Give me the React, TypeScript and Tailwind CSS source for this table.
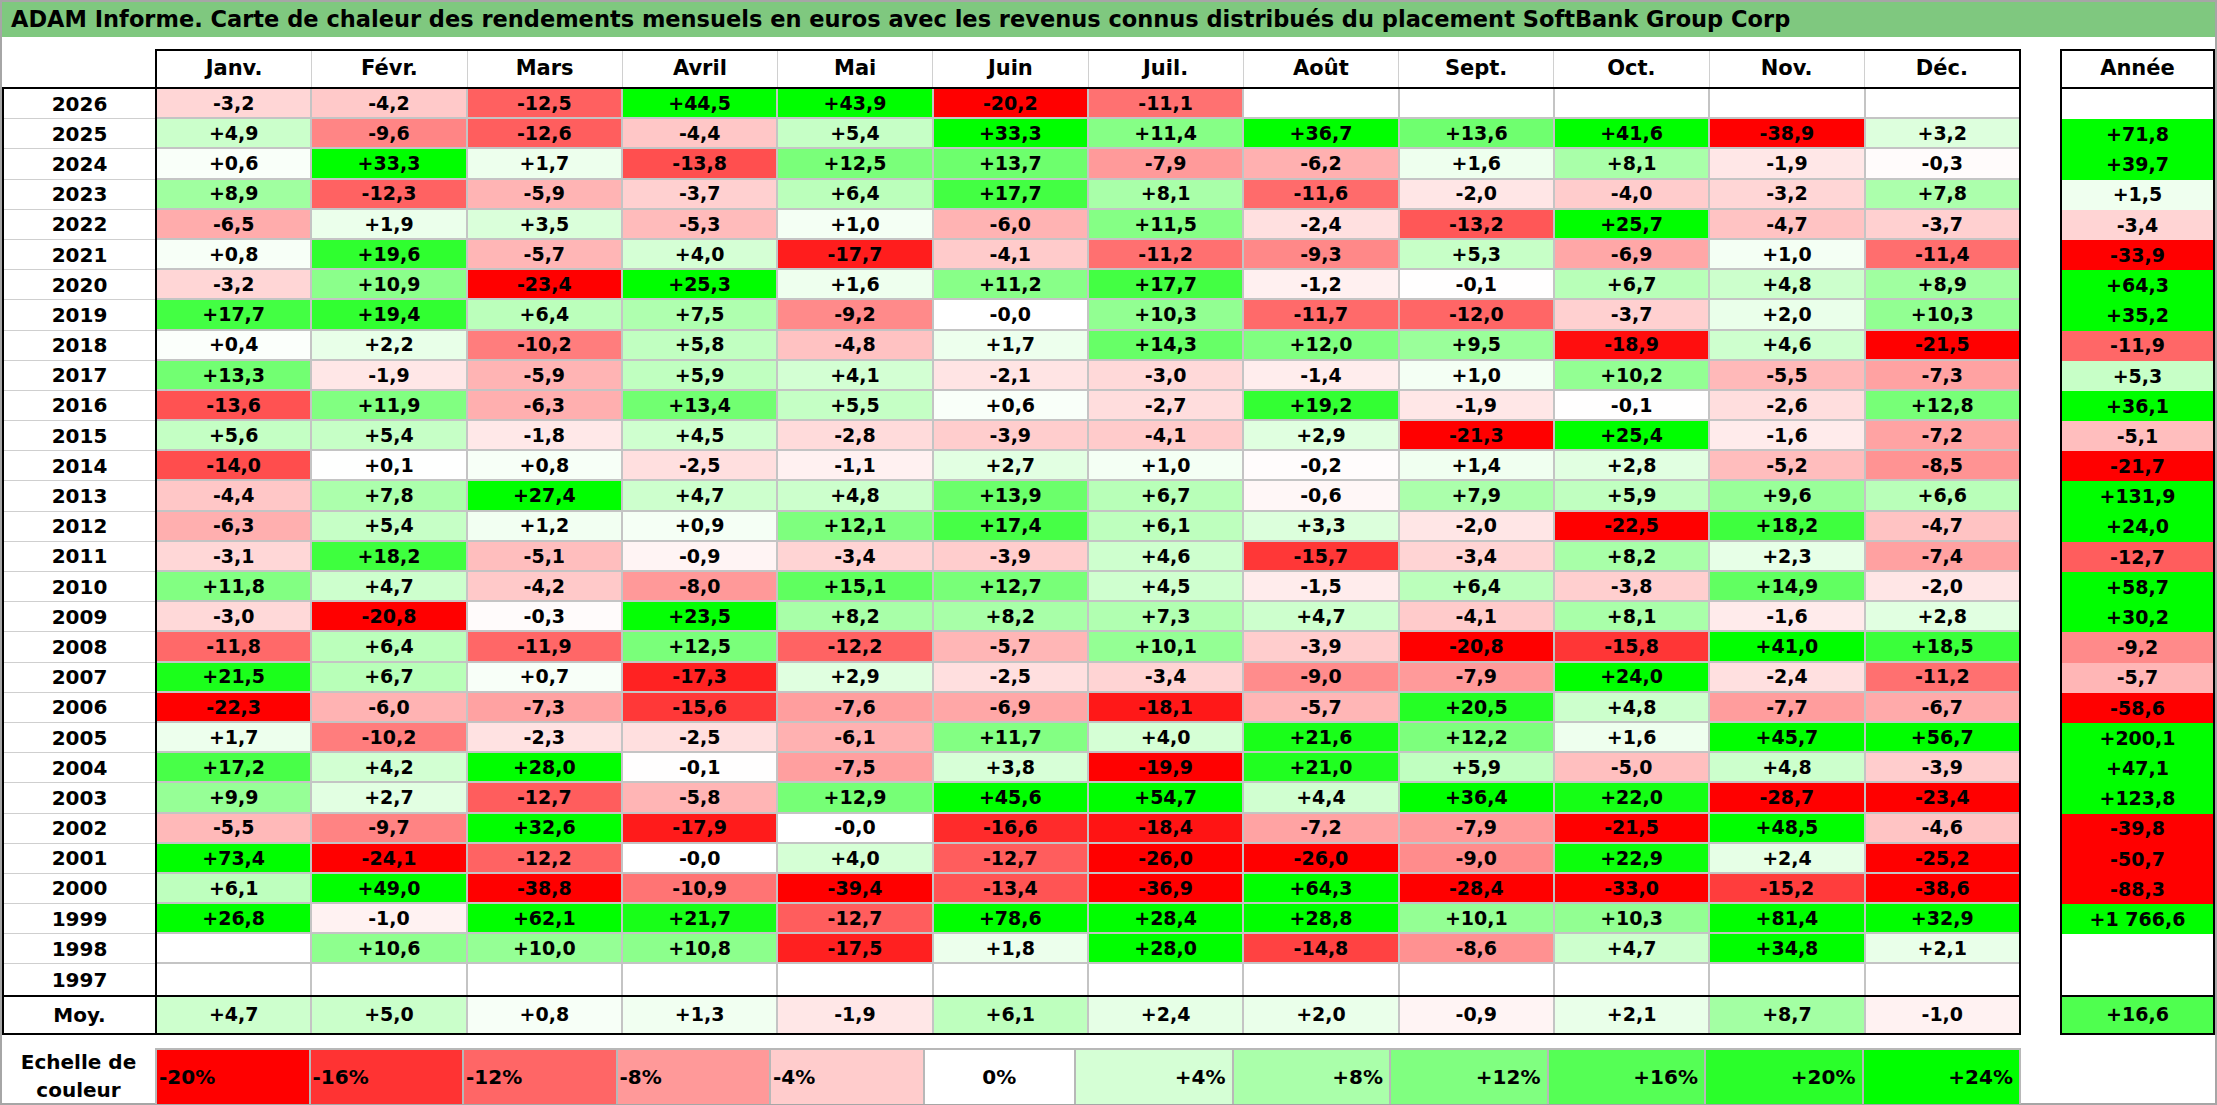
import React from "react"

const months = ["Janv.", "Févr.", "Mars", "Avril", "Mai", "Juin", "Juil.", "Août", "Sept.", "Oct.", "Nov.", "Déc."]

// year, 12 monthly values, yearly total ("" = no data)
const rows: [string, string[], string][] = [
  ["2026", ["-3,2", "-4,2", "-12,5", "+44,5", "+43,9", "-20,2", "-11,1", "", "", "", "", ""], ""],
  ["2025", ["+4,9", "-9,6", "-12,6", "-4,4", "+5,4", "+33,3", "+11,4", "+36,7", "+13,6", "+41,6", "-38,9", "+3,2"], "+71,8"],
  ["2024", ["+0,6", "+33,3", "+1,7", "-13,8", "+12,5", "+13,7", "-7,9", "-6,2", "+1,6", "+8,1", "-1,9", "-0,3"], "+39,7"],
  ["2023", ["+8,9", "-12,3", "-5,9", "-3,7", "+6,4", "+17,7", "+8,1", "-11,6", "-2,0", "-4,0", "-3,2", "+7,8"], "+1,5"],
  ["2022", ["-6,5", "+1,9", "+3,5", "-5,3", "+1,0", "-6,0", "+11,5", "-2,4", "-13,2", "+25,7", "-4,7", "-3,7"], "-3,4"],
  ["2021", ["+0,8", "+19,6", "-5,7", "+4,0", "-17,7", "-4,1", "-11,2", "-9,3", "+5,3", "-6,9", "+1,0", "-11,4"], "-33,9"],
  ["2020", ["-3,2", "+10,9", "-23,4", "+25,3", "+1,6", "+11,2", "+17,7", "-1,2", "-0,1", "+6,7", "+4,8", "+8,9"], "+64,3"],
  ["2019", ["+17,7", "+19,4", "+6,4", "+7,5", "-9,2", "-0,0", "+10,3", "-11,7", "-12,0", "-3,7", "+2,0", "+10,3"], "+35,2"],
  ["2018", ["+0,4", "+2,2", "-10,2", "+5,8", "-4,8", "+1,7", "+14,3", "+12,0", "+9,5", "-18,9", "+4,6", "-21,5"], "-11,9"],
  ["2017", ["+13,3", "-1,9", "-5,9", "+5,9", "+4,1", "-2,1", "-3,0", "-1,4", "+1,0", "+10,2", "-5,5", "-7,3"], "+5,3"],
  ["2016", ["-13,6", "+11,9", "-6,3", "+13,4", "+5,5", "+0,6", "-2,7", "+19,2", "-1,9", "-0,1", "-2,6", "+12,8"], "+36,1"],
  ["2015", ["+5,6", "+5,4", "-1,8", "+4,5", "-2,8", "-3,9", "-4,1", "+2,9", "-21,3", "+25,4", "-1,6", "-7,2"], "-5,1"],
  ["2014", ["-14,0", "+0,1", "+0,8", "-2,5", "-1,1", "+2,7", "+1,0", "-0,2", "+1,4", "+2,8", "-5,2", "-8,5"], "-21,7"],
  ["2013", ["-4,4", "+7,8", "+27,4", "+4,7", "+4,8", "+13,9", "+6,7", "-0,6", "+7,9", "+5,9", "+9,6", "+6,6"], "+131,9"],
  ["2012", ["-6,3", "+5,4", "+1,2", "+0,9", "+12,1", "+17,4", "+6,1", "+3,3", "-2,0", "-22,5", "+18,2", "-4,7"], "+24,0"],
  ["2011", ["-3,1", "+18,2", "-5,1", "-0,9", "-3,4", "-3,9", "+4,6", "-15,7", "-3,4", "+8,2", "+2,3", "-7,4"], "-12,7"],
  ["2010", ["+11,8", "+4,7", "-4,2", "-8,0", "+15,1", "+12,7", "+4,5", "-1,5", "+6,4", "-3,8", "+14,9", "-2,0"], "+58,7"],
  ["2009", ["-3,0", "-20,8", "-0,3", "+23,5", "+8,2", "+8,2", "+7,3", "+4,7", "-4,1", "+8,1", "-1,6", "+2,8"], "+30,2"],
  ["2008", ["-11,8", "+6,4", "-11,9", "+12,5", "-12,2", "-5,7", "+10,1", "-3,9", "-20,8", "-15,8", "+41,0", "+18,5"], "-9,2"],
  ["2007", ["+21,5", "+6,7", "+0,7", "-17,3", "+2,9", "-2,5", "-3,4", "-9,0", "-7,9", "+24,0", "-2,4", "-11,2"], "-5,7"],
  ["2006", ["-22,3", "-6,0", "-7,3", "-15,6", "-7,6", "-6,9", "-18,1", "-5,7", "+20,5", "+4,8", "-7,7", "-6,7"], "-58,6"],
  ["2005", ["+1,7", "-10,2", "-2,3", "-2,5", "-6,1", "+11,7", "+4,0", "+21,6", "+12,2", "+1,6", "+45,7", "+56,7"], "+200,1"],
  ["2004", ["+17,2", "+4,2", "+28,0", "-0,1", "-7,5", "+3,8", "-19,9", "+21,0", "+5,9", "-5,0", "+4,8", "-3,9"], "+47,1"],
  ["2003", ["+9,9", "+2,7", "-12,7", "-5,8", "+12,9", "+45,6", "+54,7", "+4,4", "+36,4", "+22,0", "-28,7", "-23,4"], "+123,8"],
  ["2002", ["-5,5", "-9,7", "+32,6", "-17,9", "-0,0", "-16,6", "-18,4", "-7,2", "-7,9", "-21,5", "+48,5", "-4,6"], "-39,8"],
  ["2001", ["+73,4", "-24,1", "-12,2", "-0,0", "+4,0", "-12,7", "-26,0", "-26,0", "-9,0", "+22,9", "+2,4", "-25,2"], "-50,7"],
  ["2000", ["+6,1", "+49,0", "-38,8", "-10,9", "-39,4", "-13,4", "-36,9", "+64,3", "-28,4", "-33,0", "-15,2", "-38,6"], "-88,3"],
  ["1999", ["+26,8", "-1,0", "+62,1", "+21,7", "-12,7", "+78,6", "+28,4", "+28,8", "+10,1", "+10,3", "+81,4", "+32,9"], "+1 766,6"],
  ["1998", ["", "+10,6", "+10,0", "+10,8", "-17,5", "+1,8", "+28,0", "-14,8", "-8,6", "+4,7", "+34,8", "+2,1"], ""],
  ["1997", ["", "", "", "", "", "", "", "", "", "", "", ""], ""],
]

const avg = ["+4,7", "+5,0", "+0,8", "+1,3", "-1,9", "+6,1", "+2,4", "+2,0", "-0,9", "+2,1", "+8,7", "-1,0"]
const scale = [-20, -16, -12, -8, -4, 0, 4, 8, 12, 16, 20, 24]

function heat(v: number | null) {
  if (v === null) return "#ffffff"
  if (v >= 0) {
    const c = Math.round(255 * (1 - Math.min(1, v / 24)))
    return `rgb(${c},255,${c})`
  }
  const c = Math.round(255 * (1 - Math.min(1, -v / 20)))
  return `rgb(255,${c},${c})`
}

function num(s: string) {
  if (!s) return null
  return parseFloat(s.replace(/\s/g, "").replace(",", "."))
}

export default function App() {
  return (
    <div className="w-[2217px] h-[1105px] border-2 border-[#a6a6a6] bg-white flex flex-col font-['DejaVu_Sans',sans-serif] font-bold text-black">
      <div className="h-[35px] shrink-0 bg-[#7fc87f] pl-[9px] flex items-center text-[22.5px] whitespace-nowrap">
        ADAM Informe. Carte de chaleur des rendements mensuels en euros avec les revenus connus distribués du placement SoftBank Group Corp
      </div>

      <div className="mt-[12px] flex items-start">
        {/* main table */}
        <div className="w-[2019px] flex flex-col">
          <div className="flex h-[38px]">
            <div className="w-[153px]" />
            <div className="w-[1866px] border-t-2 border-x-2 border-black flex">
              {months.map((m, i) => (
                <div
                  key={m}
                  className={`flex-1 flex items-center justify-center text-[21px] ${i < 11 ? "border-r border-[#d0d0d0]" : ""}`}
                >
                  {m}
                </div>
              ))}
            </div>
          </div>

          <div className="border-y-2 border-black flex flex-col">
            <div className="flex">
              <div className="w-[153px] border-l-2 border-black flex flex-col">
                {rows.map(([y], r) => (
                  <div
                    key={y}
                    className={`h-[30.2px] flex items-center justify-center text-[20px] ${r < rows.length - 1 ? "border-b border-[#cfcfcf]" : ""}`}
                  >
                    {y}
                  </div>
                ))}
              </div>
              <div className="w-[1866px] border-x-2 border-black flex flex-col">
                {rows.map(([y, vals], r) => (
                  <div key={y} className="flex h-[30.2px]">
                    {vals.map((v, i) => (
                      <div
                        key={i}
                        style={{ backgroundColor: heat(num(v)) }}
                        className={`flex-1 flex items-center justify-center text-[19px] border-[#c4c4c4] ${i < 11 ? "border-r-2" : ""} ${r < rows.length - 1 ? "border-b-2" : ""}`}
                      >
                        {v}
                      </div>
                    ))}
                  </div>
                ))}
              </div>
            </div>

            <div className="flex h-[38px] border-t-2 border-black">
              <div className="w-[153px] border-l-2 border-black flex items-center justify-center text-[20px]">Moy.</div>
              <div className="w-[1866px] border-x-2 border-black flex">
                {avg.map((v, i) => (
                  <div
                    key={i}
                    style={{ backgroundColor: heat(num(v)) }}
                    className={`flex-1 flex items-center justify-center text-[19px] border-[#c4c4c4] ${i < 11 ? "border-r-2" : ""}`}
                  >
                    {v}
                  </div>
                ))}
              </div>
            </div>
          </div>
        </div>

        {/* yearly column */}
        <div className="ml-[39px] w-[155px] border-2 border-black flex flex-col">
          <div className="h-[36px] flex items-center justify-center text-[21px]">Année</div>
          <div className="border-t-2 border-black flex flex-col">
            {rows.map(([y, , total]) => (
              <div
                key={y}
                style={{ backgroundColor: heat(num(total)) }}
                className="h-[30.2px] flex items-center justify-center text-[19px]"
              >
                {total}
              </div>
            ))}
          </div>
          <div
            style={{ backgroundColor: heat(num("+16,6")) }}
            className="h-[38px] border-t-2 border-black flex items-center justify-center text-[19px]"
          >
            +16,6
          </div>
        </div>
      </div>

      {/* colour scale */}
      <div className="mt-[13px] flex h-[57px]">
        <div className="w-[153px] flex items-center justify-center text-center text-[20px] leading-[28px]">
          Echelle de
          <br />
          couleur
        </div>
        <div className="w-[1866px] flex border-t-2 border-l-2 border-[#b8b8b8]">
          {scale.map((s) => (
            <div
              key={s}
              style={{ backgroundColor: heat(s) }}
              className={`flex-1 flex items-center text-[20px] border-r-2 border-[#b8b8b8] ${
                s < 0 ? "justify-start pl-[2px]" : s === 0 ? "justify-center" : "justify-end pr-[6px]"
              }`}
            >
              {s > 0 ? `+${s}%` : `${s}%`}
            </div>
          ))}
        </div>
      </div>
    </div>
  )
}
